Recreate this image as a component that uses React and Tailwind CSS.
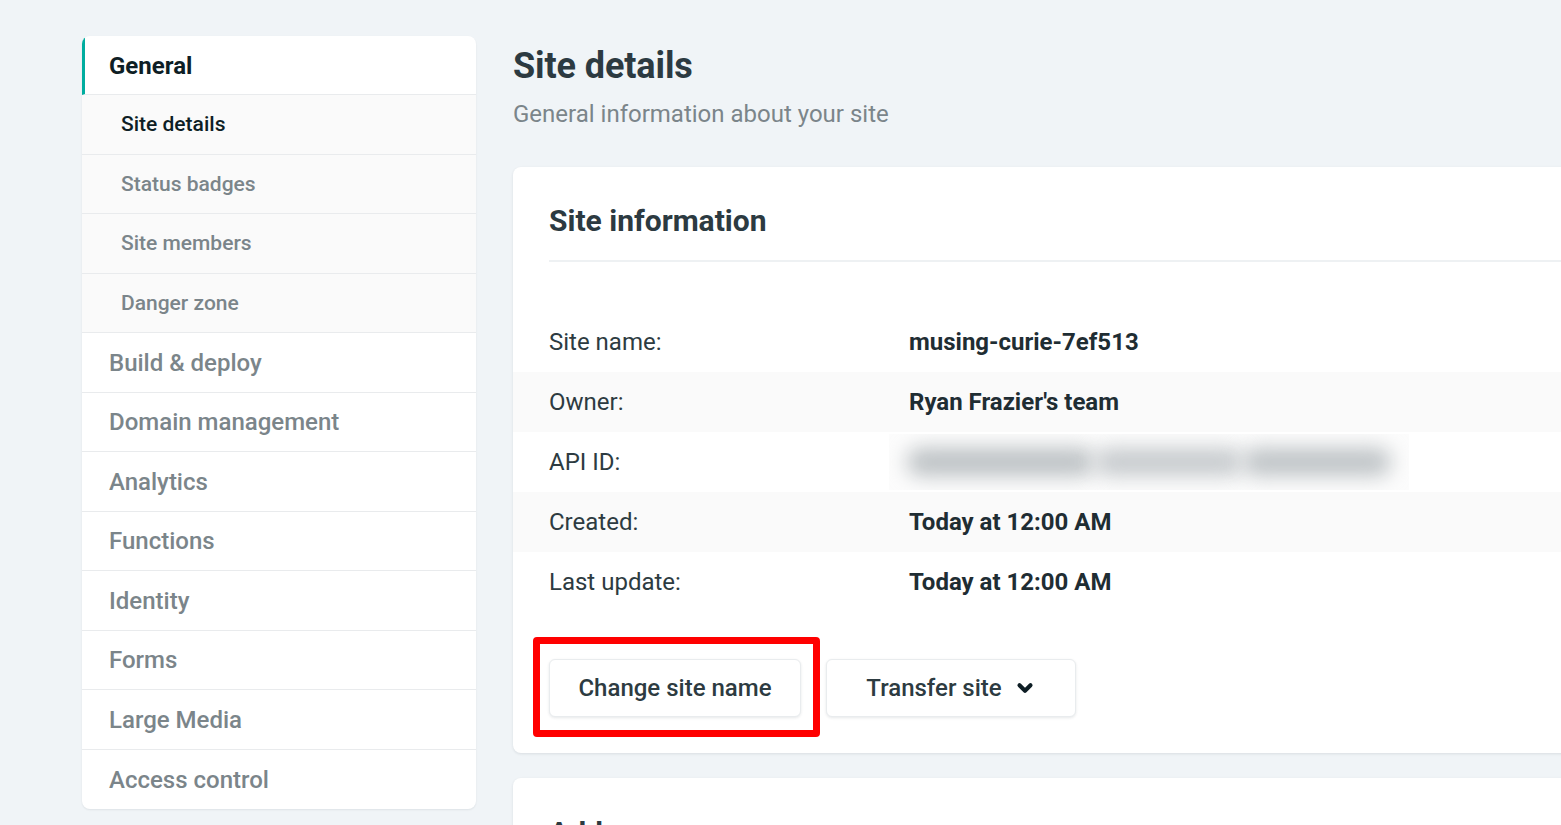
import { ChevronDown } from "lucide-react";

const subItems = [
  { label: "Site details", active: true },
  { label: "Status badges" },
  { label: "Site members" },
  { label: "Danger zone" },
];

const navItems = [
  "Build & deploy",
  "Domain management",
  "Analytics",
  "Functions",
  "Identity",
  "Forms",
  "Large Media",
  "Access control",
];

const rows = [
  { label: "Site name:", value: "musing-curie-7ef513" },
  { label: "Owner:", value: "Ryan Frazier's team", shade: true },
  { label: "API ID:", blurred: true },
  { label: "Created:", value: "Today at 12:00 AM", shade: true },
  { label: "Last update:", value: "Today at 12:00 AM" },
];

export default function App() {
  return (
    <div
      className="h-[825px] w-[1561px] overflow-hidden bg-[#f0f4f7] flex items-start pl-[82px] pt-[36px] gap-[37px] text-[#2d3b41]"
      style={{ fontFamily: "Roboto, 'Open Sans', sans-serif" }}
    >
      <Sidebar />
      <main className="w-[1100px] shrink-0">
        <h1 className="text-[36px] font-bold leading-[44px] mt-[8px] text-[#2c3a41] tracking-[-0.1px]">Site details</h1>
        <p className="text-[24px] leading-[30px] text-[#7b858a] mt-[11px]">General information about your site</p>

        <section className="mt-[38px] bg-white rounded-[8px] shadow-[0_1px_3px_rgba(14,30,37,0.10)] pt-[35px] pb-[36px]">
          <h2 className="mx-[36px] text-[30px] font-bold leading-[38px] text-[#2c3a41]">Site information</h2>
          <div className="ml-[36px] mt-[20px] h-[2px] bg-[#eef1f3]" />
          <div className="mt-[50px]">
            {rows.map((r) => (
              <div
                key={r.label}
                className={`flex items-center h-[60px] px-[36px] text-[24px] ${r.shade ? "bg-[#fafafa]" : ""}`}
              >
                <div className="w-[360px] text-[#2d3b41]">{r.label}</div>
                {r.blurred ? (
                  <div className="relative h-[56px] w-[520px] -ml-[20px] bg-[#fcfcfc] flex items-center px-[18px] overflow-hidden">
                    <span className="h-[28px] w-[190px] rounded-full bg-[#bcc1c4] blur-[10px]" />
                    <span className="h-[28px] w-[150px] rounded-full bg-[#c6cacd] blur-[10px]" />
                    <span className="h-[28px] w-[150px] rounded-full bg-[#bec3c6] blur-[10px]" />
                  </div>
                ) : (
                  <div className="font-bold text-[#1f2d33]">{r.value}</div>
                )}
              </div>
            ))}
          </div>
          <div className="flex gap-[25px] mx-[36px] mt-[47px]">
            <div className="relative">
              <button className="h-[58px] w-[252px] rounded-[6px] bg-white border border-[#e9ecee] shadow-[0_1px_3px_rgba(14,30,37,0.10)] text-[24px] font-medium text-[#2d3b41]">
                Change site name
              </button>
              <div className="absolute -left-[16px] -right-[19px] -top-[22px] -bottom-[20px] border-[7px] border-[#ff0000] rounded-[4px] pointer-events-none" />
            </div>
            <button className="h-[58px] w-[250px] rounded-[6px] bg-white border border-[#e9ecee] shadow-[0_1px_3px_rgba(14,30,37,0.10)] text-[24px] font-medium text-[#2d3b41] flex items-center justify-center gap-[12px]">
              Transfer site
              <ChevronDown className="w-[22px] h-[22px] text-[#0e1e25]" strokeWidth={4.5} />
            </button>
          </div>
        </section>

        <section className="mt-[25px] bg-white rounded-[8px] shadow-[0_1px_3px_rgba(14,30,37,0.10)] pt-[36px] px-[36px] h-[200px]">
          <h2 className="text-[30px] font-bold leading-[38px] text-[#2c3a41]">Addons</h2>
        </section>
      </main>
    </div>
  );
}

function Sidebar() {
  return (
    <nav className="w-[394px] shrink-0 bg-white rounded-[8px] shadow-[0_1px_2px_rgba(14,30,37,0.08)] overflow-hidden">
      <div className="h-[59px] flex items-center pl-[24px] pt-[2px] border-l-[3px] border-[#00ad9f] border-b border-b-[#e9ebed] text-[24px] font-bold text-[#0e1e25]">
        General
      </div>
      {subItems.map((s) => (
        <div
          key={s.label}
          className={`h-[59.5px] flex items-center pl-[39px] pt-[1px] bg-[#fafafa] border-b border-[#e9ebed] text-[21px] font-medium ${s.active ? "text-[#0e1e25]" : "text-[#7b858a]"}`}
        >
          {s.label}
        </div>
      ))}
      {navItems.map((n, i) => (
        <div
          key={n}
          className={`h-[59.5px] flex items-center pl-[27px] pt-[1px] text-[24px] font-medium text-[#7b858a] ${i < navItems.length - 1 ? "border-b border-[#e9ebed]" : ""}`}
        >
          {n}
        </div>
      ))}
    </nav>
  );
}
